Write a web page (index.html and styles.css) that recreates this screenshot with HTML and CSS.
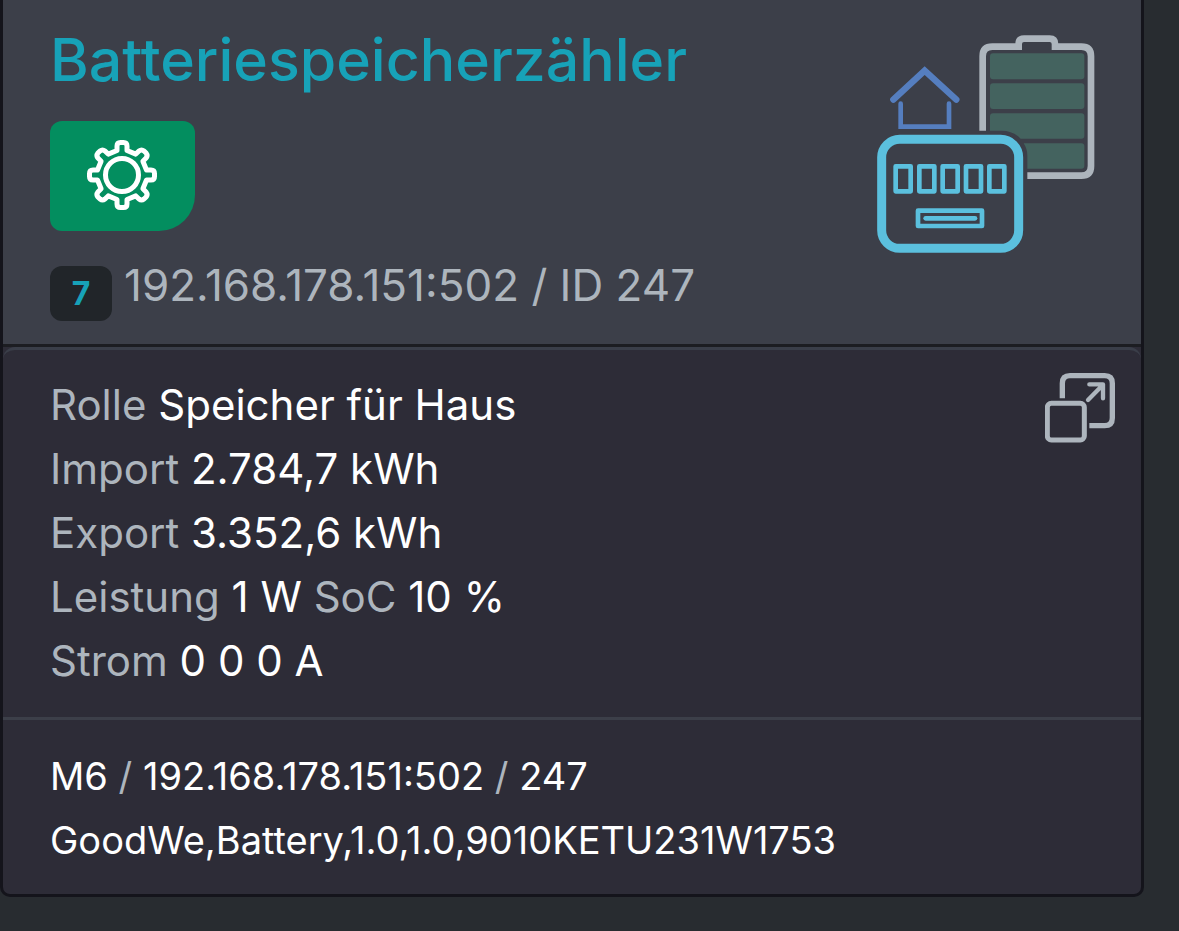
FILE: index.html
```html
<!DOCTYPE html>
<html lang="de">
<head>
    <meta charset="UTF-8">
    <meta name="viewport" content="width=device-width, initial-scale=1.0">
    <title>Batteriespeicherzähler</title>
    <link rel="stylesheet" href="styles.css">
</head>
<body>
    <div class="card">
        <div class="card-header">
            <div class="header-info">
                <h1 class="card-title">Batteriespeicherzähler</h1>
                <button class="settings-button" type="button" aria-label="Einstellungen">
                    <svg class="gear-icon" viewBox="-35 -35 72 72">
                        <circle r="16.5"/>
                        <path d="M-5 -24.5V-29Q-5 -32.5 -1.500 -32.500H1.500Q5 -32.500 5 -29V-24.500L13.800 -20.900L17 -24.100Q19.500 -26 22 -24.100L24.100 -22Q26 -19.500 24.100 -17L20.900 -13.800L24.500 -5H29Q32.500 -5 32.500 -1.500V1.500Q32.500 5 29 5H24.500L20.900 13.800L24.100 17Q26 19.500 24.100 22L22 24.100Q19.500 26 17 24.100L13.800 20.900L5 24.500V29Q5 32.500 1.500 32.500H-1.500Q-5 32.500 -5 29V24.500L-13.800 20.900L-17 24.100Q-19.500 26 -22 24.100L-24.100 22Q-26 19.500 -24.100 17L-20.900 13.800L-24.500 5H-29Q-32.500 5 -32.500 1.500V-1.500Q-32.500 -5 -29 -5H-24.500L-20.900 -13.800L-24.100 -17Q-26 -19.500 -24.100 -22L-22 -24.100Q-19.500 -26 -17 -24.100L-13.800 -20.900Z"/>
                    </svg>
                </button>
                <div class="address-row">
                    <span class="badge">7</span>
                    <span class="address">192.168.178.151:502 / ID 247</span>
                </div>
            </div>
            <svg class="meter-icon" viewBox="50 44 654 654" fill="none">
                <!-- battery -->
                <path stroke="#adb5bd" stroke-width="20" d="M367 331V108Q367 79 396 79H475V71Q475 55 491 55H568Q584 55 584 71V79H663Q692 79 692 108V437Q692 466 663 466H501"/>
                <g fill="#44635f">
                    <rect x="389" y="99" width="283" height="78" rx="9"/>
                    <rect x="389" y="189" width="283" height="77" rx="9"/>
                    <path d="M389 331V288Q389 279 398 279H663Q672 279 672 288V346Q672 355 663 355H481Q458 331 424 331Z"/>
                    <path d="M490 369H663Q672 369 672 378V436Q672 445 663 445H501V405Q501 386 490 369Z"/>
                </g>
                <!-- house -->
                <path stroke="#557ebf" stroke-width="19" stroke-linecap="round" d="M99 238L193 151L288 238"/>
                <path stroke="#557ebf" stroke-width="14" stroke-linecap="round" d="M121 250V319H266V250"/>
                <!-- meter -->
                <g stroke="#5bc0de">
                    <rect x="64" y="357" width="411" height="327" rx="54" stroke-width="27"/>
                    <g stroke-width="14" stroke-linejoin="round">
                        <rect x="106" y="438" width="45" height="75"/>
                        <rect x="177" y="438" width="45" height="75"/>
                        <rect x="247" y="438" width="45" height="75"/>
                        <rect x="317" y="438" width="45" height="75"/>
                        <rect x="387" y="438" width="45" height="75"/>
                        <rect x="173" y="571" width="192" height="46"/>
                        <path stroke-linecap="round" d="M196 594H344"/>
                    </g>
                </g>
            </svg>
        </div>
        <div class="card-body">
            <div class="values">
                <div><span class="label">Rolle</span> Speicher für Haus</div>
                <div><span class="label">Import</span> 2.784,7 kWh</div>
                <div><span class="label">Export</span> 3.352,6 kWh</div>
                <div><span class="label">Leistung</span> 1 W <span class="label">SoC</span> 10 %</div>
                <div><span class="label">Strom</span> 0 0 0 A</div>
            </div>
            <button class="expand-button" type="button" aria-label="Vergrößern">
                <svg class="expand-icon" viewBox="45 128 210 210" fill="none" stroke="#adb5bd">
                    <path stroke-width="16" d="M97 204V159Q97 136 120 136H224Q247 136 247 159V263Q247 286 224 286H178"/>
                    <rect x="52" y="219" width="111" height="110" rx="12" stroke-width="15"/>
                    <path stroke-width="13" stroke-linecap="round" stroke-linejoin="round" d="M174 209L219 163M178 162H219V204"/>
                </svg>
            </button>
        </div>
        <div class="card-footer">
            <div>M6 <span class="label">/</span> 192.168.178.151:502 <span class="label">/</span> 247</div>
            <div>GoodWe,Battery,1.0,1.0,9010KETU231W1753</div>
        </div>
    </div>
</body>
</html>
```
FILE: styles.css
```css
body {
    margin: 0;
    padding-right: 35px;
    background: #282c30;
    color: white;
    font-family: Inter, "Liberation Sans", sans-serif;
    font-size: 42px;
    line-height: 64px;
}

.card {
    border: 3px solid #14141b;
    border-top: 0;
    border-radius: 0 0 10px 10px;
    background: #2d2c37;
    overflow: hidden;
}

.card-header {
    display: flex;
    justify-content: space-between;
    align-items: flex-start;
    padding: 22px 46px 23px 47px;
    background: #3c3f49;
    border-bottom: 3px solid #1c1d22;
}

.card-title {
    margin: 0 0 24px;
    color: #17a2b8;
    font-size: 59px;
    font-weight: 500;
    line-height: 75px;
}

.settings-button {
    display: flex;
    align-items: center;
    justify-content: center;
    width: 145px;
    height: 110px;
    margin-bottom: 22px;
    padding: 0;
    border: 0;
    border-radius: 12px 12px 36px 12px;
    background: #038e5f;
    cursor: pointer;
}

.gear-icon {
    width: 72px;
    height: 72px;
    fill: none;
    stroke: white;
    stroke-width: 5;
    stroke-linejoin: round;
}

.address-row {
    display: flex;
    align-items: flex-start;
    gap: 12px;
    color: #adb5bd;
    font-size: 44px;
}

.badge {
    width: 62px;
    margin-top: 13px;
    border-radius: 12px;
    background: #212529;
    color: #17a2b8;
    font-size: 32px;
    font-weight: 700;
    line-height: 55px;
    text-align: center;
}

.meter-icon {
    flex: none;
    width: 218px;
    height: 218px;
    margin-top: 13px;
}

.card-body {
    display: flex;
    justify-content: space-between;
    align-items: flex-start;
    padding: 23px 26px 24px 47px;
    border-top: 3px solid #3a3e49;
    border-radius: 12px 12px 0 0;
}

.label {
    color: #adb5bd;
}

.expand-button {
    flex: none;
    padding: 0;
    border: 0;
    background: none;
    cursor: pointer;
}

.expand-icon {
    display: block;
    width: 70px;
    height: 70px;
}

.card-footer {
    padding: 24px 47px 22px;
    border-top: 3px solid #3c3f49;
    font-size: 38px;
}
```
